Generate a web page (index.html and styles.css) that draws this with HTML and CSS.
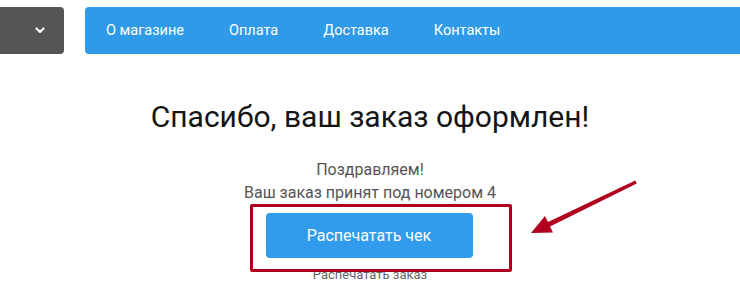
FILE: index.html
```html
<!DOCTYPE html>
<html lang="ru">
<head>
<meta charset="utf-8">
<title>Заказ оформлен</title>
<link rel="stylesheet" href="styles.css">
</head>
<body>
<div class="page">
  <header class="top">
    <div class="catalog">
      <svg class="chev" width="10" height="7" viewBox="0 0 10 7"><path d="M1.5 1.5 L5 5 L8.5 1.5" fill="none" stroke="#fff" stroke-width="2.2" stroke-linecap="round" stroke-linejoin="round"/></svg>
    </div>
    <nav class="menu">
      <a class="menu-item">О магазине</a>
      <a class="menu-item">Оплата</a>
      <a class="menu-item">Доставка</a>
      <a class="menu-item">Контакты</a>
    </nav>
  </header>
  <main class="done">
    <h1 class="title">Спасибо, ваш заказ оформлен!</h1>
    <p class="msg">Поздравляем!</p>
    <p class="msg">Ваш заказ принят под номером 4</p>
    <button class="print">Распечатать чек</button>
    <p class="sub">Распечатать заказ</p>
  </main>
  <div class="frame"></div>
  <svg class="arrow" width="740" height="293" viewBox="0 0 740 293">
    <polygon points="531,233 545,216 548,222 635.3,180.4 636.8,183.6 550,226.5 553,232.5" fill="#b1001f"/>
  </svg>
</div>
</body>
</html>
```
FILE: styles.css
```css
* { box-sizing: border-box; }
html, body { margin: 0; padding: 0; }
body {
  background: #fff;
  font-family: Roboto, "Noto Sans", Arial, sans-serif;
  overflow: hidden;
  width: 740px;
  height: 293px;
}
.page {
  position: relative;
  width: 740px;
  height: 293px;
  overflow: hidden;
}
.top {
  display: flex;
  gap: 21px;
  padding-top: 7px;
  height: 54px;
}
.catalog {
  width: 64px;
  height: 47px;
  background: #555654;
  border-radius: 0 4px 4px 0;
  display: flex;
  align-items: center;
  justify-content: flex-end;
  padding-right: 19px;
}
.chev { display: block; margin-top: -1px; }
.menu {
  flex: 1;
  margin-right: -10px;
  height: 47px;
  background: #2f9ae8;
  border-radius: 4px;
  display: flex;
  align-items: center;
  gap: 45px;
  padding-left: 21px;
}
.menu-item {
  color: #fff;
  font-size: 14.5px;
  text-decoration: none;
}
.done {
  display: flex;
  flex-direction: column;
  align-items: center;
  padding-top: 45px;
}
.title {
  margin: 0;
  font-size: 30px;
  font-weight: 400;
  color: #151515;
  line-height: 36px;
}
.msg {
  margin: 0;
  font-size: 16px;
  color: #555;
  line-height: 23px;
}
.title + .msg { margin-top: 23px; }
.print {
  margin-top: 9px;
  margin-left: -2px;
  width: 207px;
  height: 45px;
  border: 0;
  border-radius: 4px;
  background: #309ceb;
  color: #fff;
  font-family: inherit;
  font-size: 16px;
  cursor: pointer;
}
.sub {
  margin: 9px 0 0;
  font-size: 13px;
  color: #666;
  line-height: 16px;
}
.frame {
  position: absolute;
  left: 250px;
  top: 204px;
  width: 262px;
  height: 68px;
  border: 3px solid #ad001e;
  border-radius: 2px;
}
.arrow {
  position: absolute;
  left: 0;
  top: 0;
  pointer-events: none;
}
```
